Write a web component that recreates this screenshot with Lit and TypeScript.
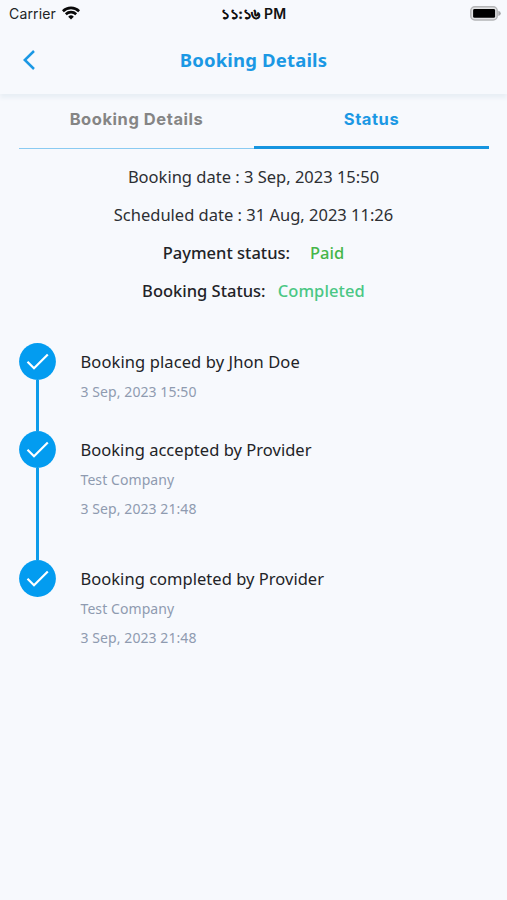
import { LitElement, html, css } from "lit";
import { customElement, property } from "lit/decorators.js";

interface Step {
  title: string;
  lines: string[];
  kind: string;
}

const STEPS: Step[] = [
  { title: "Booking placed by Jhon Doe", lines: ["3 Sep, 2023 15:50"], kind: "placed" },
  { title: "Booking accepted by Provider", lines: ["Test Company", "3 Sep, 2023 21:48"], kind: "accepted" },
  { title: "Booking completed by Provider", lines: ["Test Company", "3 Sep, 2023 21:48"], kind: "completed" },
];

@customElement("status-bar")
export class StatusBar extends LitElement {
  static styles = css`
    :host {
      display: grid;
      grid-template-columns: 1fr auto 1fr;
      align-items: center;
      height: 27px;
      padding: 0 6px 0 9px;
      font-family: Inter, "Liberation Sans", sans-serif;
      color: #222426;
    }
    .left { display: flex; align-items: center; gap: 6px; font-size: 14px; }
    .carrier { letter-spacing: 0.15px; }
    .left svg { margin-top: -2px; }
    .time { display: flex; align-items: baseline; gap: 4px; font-size: 14px; font-weight: 600; color: #111; white-space: nowrap; line-height: 16px; margin-left: -3px; }
    .digits { font-weight: 700; letter-spacing: -0.3px; -webkit-text-stroke: 0.4px #111; }
    .right { display: flex; justify-content: flex-end; }
    svg { display: block; }
  `;
  render() {
    return html`
      <div class="left">
        <span class="carrier">Carrier</span>
        <svg width="18" height="14" viewBox="0 0 18 14" fill="none" stroke="#090909" stroke-width="2.6">
          <path d="M0.9 5.2A11.6 11.6 0 0 1 17.1 5.2" />
          <path d="M3.8 8.2A7.5 7.5 0 0 1 14.2 8.2" />
          <path d="M6.2 10.7A4 4 0 0 1 11.8 10.7L9 13.6Z" fill="#090909" stroke="none" />
        </svg>
      </div>
      <div class="time"><span class="digits">১১:১৬</span><span>PM</span></div>
      <div class="right">
        <svg width="31" height="15" viewBox="0 0 31 15">
          <rect x="0.8" y="0.8" width="26.4" height="13.2" rx="4" fill="#e2e3e5" stroke="#b4b5b7" stroke-width="1.5" />
          <rect x="3.1" y="3" width="22" height="8.8" rx="1.4" fill="#000" />
          <path d="M28.3 4.8Q30.8 5.5 30.8 7.4T28.3 10Z" fill="#a5a6a8" />
        </svg>
      </div>
    `;
  }
}

@customElement("timeline-step")
export class TimelineStep extends LitElement {
  @property({ attribute: false }) step!: Step;
  static styles = css`
    :host { display: flex; gap: 24.5px; }
    .rail { display: flex; flex-direction: column; align-items: center; width: 37px; }
    .dot { display: block; flex: none; }
    .line { flex: 1; width: 3px; background: #0d9cea; }
    .body { display: flex; flex-direction: column; white-space: nowrap; }
    .title { height: 37px; line-height: 38px; font-size: 16.5px; color: #222327; letter-spacing: 0.03px; }
    .sub { height: 29.3px; line-height: 24px; font-size: 14px; color: #8f9bb0; letter-spacing: 0.08px; }
    .placed { height: 88px; }
    .placed + .body .title { letter-spacing: 0.1px; }
    .accepted { height: 129px; }
    .completed { height: 98px; }
  `;
  render() {
    const s = this.step;
    return html`
      <div class="rail ${s.kind}">
        <svg class="dot" width="37" height="37" viewBox="0 0 37 37">
          <circle cx="18.5" cy="18.5" r="18.4" fill="#039cf0" />
          <path d="M8.5 18.8L15 25.2L28.8 11.5" fill="none" stroke="#fff" stroke-width="2.2" />
        </svg>
        ${s.kind === "completed" ? null : html`<div class="line"></div>`}
      </div>
      <div class="body">
        <div class="title"><span>${s.title}</span></div>
        ${s.lines.map((l) => html`<div class="sub"><span>${l}</span></div>`)}
      </div>
    `;
  }
}

@customElement("app-root")
export class AppRoot extends LitElement {
  static styles = css`
    :host {
      display: block;
      box-sizing: border-box;
      height: 900px;
      overflow: hidden;
      background: #f7f9fd;
      font-family: "Noto Sans", "Open Sans", sans-serif;
      color: #2d2f33;
    }
    .header {
      display: grid;
      grid-template-columns: 60px 1fr 60px;
      align-items: center;
      box-sizing: border-box;
      height: 67px;
      padding-bottom: 2px;
      box-shadow: 0 4px 4px #e9eff5;
    }
    .back { display: block; margin-left: 22px; }
    .heading { text-align: center; font-size: 18.5px; font-weight: 700; color: #1b98e4; letter-spacing: 0.17px; }
    .tabs {
      display: grid;
      grid-template-columns: 1fr 1fr;
      height: 55px;
      padding: 0 18.5px;
      font-family: Inter, "Liberation Sans", sans-serif;
      font-size: 16.5px;
      font-weight: 700;
      text-align: center;
    }
    .tab { line-height: 51px; padding-left: 1px; color: #858585; letter-spacing: 0.55px; border-bottom: 1px solid #8acbf2; }
    .active { color: #1b98e4; border-bottom: 3px solid #1695e0; }
    .info { display: flex; justify-content: center; align-items: center; height: 38px; font-size: 16.5px; white-space: nowrap; }
    .strong { font-weight: 500; color: #222327; }
    .paid { font-weight: 500; color: #45b649; margin-left: 20px; }
    .done { font-weight: 500; color: #4ac784; margin-left: 12px; letter-spacing: 0.1px; }
    .infos { padding-top: 8px; }
    .timeline { padding: 34px 0 0 19px; }
  `;
  render() {
    return html`
      <status-bar></status-bar>
      <div class="header">
        <svg class="back" width="16" height="22" viewBox="0 0 16 22" fill="none" stroke="#1b98e4" stroke-width="2.5">
          <path d="M12 2L2.8 11L12 20" />
        </svg>
        <div class="heading"><span>Booking Details</span></div>
      </div>
      <div class="tabs">
        <div class="tab">Booking Details</div>
        <div class="tab active">Status</div>
      </div>
      <div class="infos">
        <div class="info"><span>Booking date : 3 Sep, 2023 15:50</span></div>
        <div class="info"><span>Scheduled date : 31 Aug, 2023 11:26</span></div>
        <div class="info"><span class="strong">Payment status:</span><span class="paid">Paid</span></div>
        <div class="info"><span class="strong">Booking Status:</span><span class="done">Completed</span></div>
      </div>
      <div class="timeline">
        ${STEPS.map((s) => html`<timeline-step .step=${s}></timeline-step>`)}
      </div>
    `;
  }
}
